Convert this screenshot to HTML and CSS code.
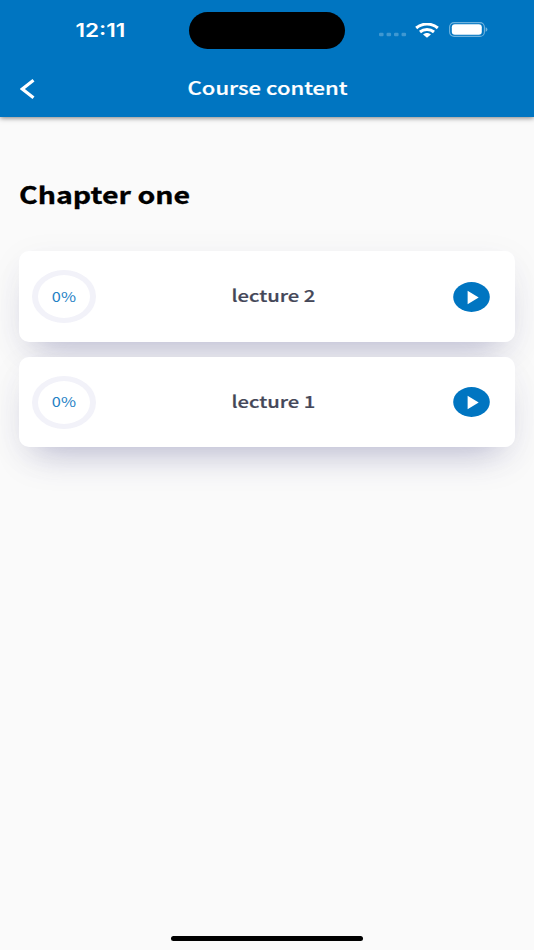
FILE: index.html
```
<!DOCTYPE html>
<html lang="en">
  <head>
    <meta charset="utf-8" />
    <title>Course content</title>
    <link rel="stylesheet" href="styles.css">
  </head>

  <body>
    <div class="screen">
      <header class="header">
        <div class="statusbar">
          <span class="time"><span class="wide">12:11</span></span>
          <div class="island"></div>
          <div class="indicators">
            <svg class="signal" viewBox="0 0 28 5">
              <rect x="0" y="0.7" width="4.6" height="3.6" rx="1.2" />
              <rect x="7.5" y="0.7" width="4.6" height="3.6" rx="1.2" />
              <rect x="15" y="0.7" width="4.6" height="3.6" rx="1.2" />
              <rect x="22.5" y="0.7" width="4.6" height="3.6" rx="1.2" />
            </svg>
            <svg class="wifi" viewBox="0 0 24 15">
              <path d="M1.2 5C7.200-.2 16.800-.2 22.800 5M5 9C9 5.600 15 5.600 19 9" />
              <path class="wifi-dot" d="M8.100 11.500C10.300 9.500 13.700 9.500 15.900 11.500L12 14.800Z" />
            </svg>
            <svg class="battery" viewBox="0 0 39 16">
              <rect class="battery-case" x="0.600" y="0.600" width="34.800" height="13.800" rx="4.500" />
              <rect class="battery-level" x="2.800" y="2.300" width="30" height="10.400" rx="3" />
              <path class="battery-tip" d="M36.600 5.300Q38.400 5.800 38.400 7.500T36.600 9.700Z" />
            </svg>
          </div>
        </div>
        <nav class="navbar">
          <a class="back" href="#" aria-label="Back">
            <svg viewBox="0 0 15 20"><path d="M13.500 1.300L2.300 10L13.500 18.700" /></svg>
          </a>
          <h1 class="title"><span class="wide">Course content</span></h1>
        </nav>
      </header>

      <main class="content">
        <h2 class="chapter"><span class="wide">Chapter one</span></h2>
        <div class="lectures">
          <div class="lecture">
            <div class="progress"><span class="wide">0%</span></div>
            <span class="name"><span class="wide">lecture 2</span></span>
            <svg class="play" viewBox="0 0 37 30">
              <ellipse cx="18.500" cy="15" rx="18.300" ry="14.900" />
              <path d="M14.600 8.700V22.200L25.700 15.450Z" />
            </svg>
          </div>
          <div class="lecture">
            <div class="progress"><span class="wide">0%</span></div>
            <span class="name"><span class="wide">lecture 1</span></span>
            <svg class="play" viewBox="0 0 37 30">
              <ellipse cx="18.500" cy="15" rx="18.300" ry="14.900" />
              <path d="M14.600 8.700V22.200L25.700 15.450Z" />
            </svg>
          </div>
        </div>
      </main>

      <footer class="home"><div class="home-bar"></div></footer>
    </div>
  </body>
</html>
```
FILE: styles.css
```
* {
  box-sizing: border-box;
}

html,
body {
  margin: 0;
  padding: 0;
  overflow: hidden;
}

body {
  font-family: 'Noto Sans CJK SC', 'Noto Sans', sans-serif;
  background-color: #fafafa;
}

h1,
h2 {
  margin: 0;
}

svg {
  display: block;
}

.screen {
  display: flex;
  flex-direction: column;
  height: 100vh;
}

.wide {
  display: inline-block;
  transform: scaleX(1.22);
  white-space: nowrap;
}

.header {
  height: 117px;
  background-color: #0075c1;
  color: white;
  box-shadow: 0 1px 5px rgba(0, 0, 0, 0.5);
}

.statusbar {
  display: grid;
  grid-template-columns: 189px 156px 189px;
  height: 60px;
  align-items: center;
}

.time {
  padding-left: 12px;
  font-family: Inter, sans-serif;
  font-size: 18.5px;
  font-weight: 600;
  text-align: center;
}

.island {
  height: 37px;
  border-radius: 19px;
  background-color: black;
}

.indicators {
  display: flex;
  align-items: center;
  padding-left: 34px;
}

.signal {
  width: 28px;
  height: 5px;
  margin-top: 9px;
  fill: #3f98d1;
}

.wifi {
  width: 24px;
  height: 15px;
  margin-left: 8px;
  fill: none;
  stroke: white;
  stroke-width: 3;
}

.wifi .wifi-dot {
  fill: white;
  stroke: none;
}

.battery {
  width: 39px;
  height: 16px;
  margin-left: 10px;
}

.battery-case {
  fill: none;
  stroke: #70b3dd;
  stroke-width: 1.1;
}

.battery-level {
  fill: white;
}

.battery-tip {
  fill: #70b3dd;
}

.navbar {
  display: grid;
  grid-template-columns: 60px 1fr 60px;
  align-items: center;
  height: 57px;
}

.back {
  padding-left: 20px;
}

.back svg {
  width: 15px;
  height: 20px;
  fill: none;
  stroke: white;
  stroke-width: 3.2;
}

.title {
  padding: 0 0 4px 1px;
  font-size: 18.1px;
  font-weight: 500;
  line-height: 28px;
  text-align: center;
  -webkit-text-stroke: 0.2px;
}

.content {
  flex: 1;
  padding: 59px 19px 0;
}

.chapter {
  font-size: 23.4px;
  font-weight: 700;
  line-height: 36px;
  -webkit-text-stroke: 0.3px;
}

.chapter .wide {
  transform-origin: left;
}

.lectures {
  display: flex;
  flex-direction: column;
  gap: 15px;
  margin-top: 39px;
}

.lecture {
  display: grid;
  grid-template-columns: 64px 1fr 37px;
  align-items: center;
  height: 90.6px;
  padding: 1px 25px 0 13px;
  border-radius: 10px;
  background-color: white;
  box-shadow: 0 20px 36px -16px rgba(60, 60, 130, 0.34), 0 8px 36px rgba(60, 60, 100, 0.05);
}

.progress {
  display: flex;
  align-items: center;
  justify-content: center;
  height: 53px;
  padding-bottom: 2px;
  border: solid #f2f2f9;
  border-width: 5px 6px;
  border-radius: 50%;
  color: #1f82c5;
  font-size: 13.4px;
}

.name {
  padding: 0 2px 3px 0;
  color: #444758;
  font-size: 16.6px;
  font-weight: 500;
  text-align: center;
  -webkit-text-stroke: 0.2px;
}

.play {
  width: 37px;
  height: 30px;
  fill: #0075c1;
}

.play path {
  fill: white;
}

.home {
  display: flex;
  justify-content: center;
  height: 14px;
}

.home-bar {
  width: 192px;
  height: 5px;
  border-radius: 3px;
  background-color: black;
}
```
